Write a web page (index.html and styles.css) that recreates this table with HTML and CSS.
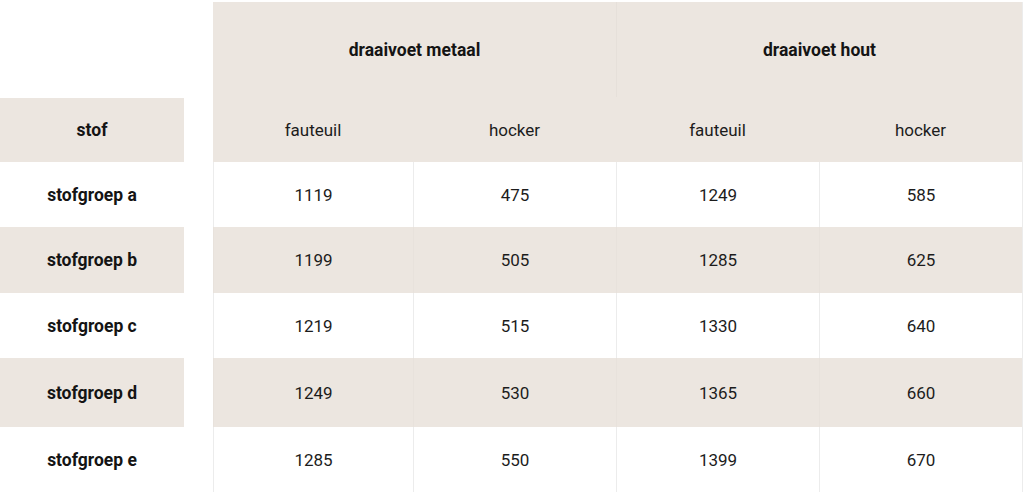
FILE: index.html
```html
<!DOCTYPE html>
<html lang="nl">
<head>
<meta charset="utf-8">
<title>Prijzen</title>
<link rel="stylesheet" href="styles.css">
</head>
<body>
<div class="wrap">
  <div class="side">
    <div class="cell head bold">stof</div>
    <div class="cell bold">stofgroep a</div>
    <div class="cell alt bold">stofgroep b</div>
    <div class="cell bold">stofgroep c</div>
    <div class="cell alt bold">stofgroep d</div>
    <div class="cell bold">stofgroep e</div>
  </div>
  <div class="main">
    <div class="cell head bold group">draaivoet metaal</div>
    <div class="cell head bold group">draaivoet hout</div>
    <div class="cell head">fauteuil</div>
    <div class="cell head">hocker</div>
    <div class="cell head">fauteuil</div>
    <div class="cell head">hocker</div>

    <div class="cell b">1119</div><div class="cell b">475</div><div class="cell b">1249</div><div class="cell b">585</div>
    <div class="cell b alt">1199</div><div class="cell b alt">505</div><div class="cell b alt">1285</div><div class="cell b alt">625</div>
    <div class="cell b">1219</div><div class="cell b">515</div><div class="cell b">1330</div><div class="cell b">640</div>
    <div class="cell b alt">1249</div><div class="cell b alt">530</div><div class="cell b alt">1365</div><div class="cell b alt">660</div>
    <div class="cell b">1285</div><div class="cell b">550</div><div class="cell b">1399</div><div class="cell b">670</div>
  </div>
</div>
</body>
</html>
```
FILE: styles.css
```css
html, body {
  margin: 0;
  padding: 0;
  background: #ffffff;
}
body {
  font-family: Roboto, "Liberation Sans", Arial, sans-serif;
  font-size: 17px;
  color: #1c1c1c;
}
.wrap {
  display: flex;
  align-items: flex-start;
  gap: 29px;
  padding-top: 2px;
  width: 1023px;
}
.side {
  width: 184px;
  margin-top: 96px;
  display: grid;
  grid-template-columns: 1fr;
  grid-template-rows: 64px 65px 66px 65px 69px 65px;
}
.main {
  flex: 1;
  display: grid;
  grid-template-columns: 200px 203px 203px 1fr;
  grid-template-rows: 95px 65px 65px 66px 65px 69px 65px;
  border-right: 1px solid #ececec;
}
.cell {
  display: flex;
  align-items: center;
  justify-content: center;
  background: #ffffff;
}
.head, .alt {
  background: #ece6e0;
}
.bold {
  font-weight: 700;
  font-size: 17.5px;
  color: #141414;
}
.group {
  grid-column: span 2;
  border-left: 1px solid #e6e0da;
}
.group:first-child {
  border-left: none;
}
.main .b {
  border-left: 1px solid #ececec;
}
.main .b.alt {
  border-left-color: #e8e2dc;
}
```
